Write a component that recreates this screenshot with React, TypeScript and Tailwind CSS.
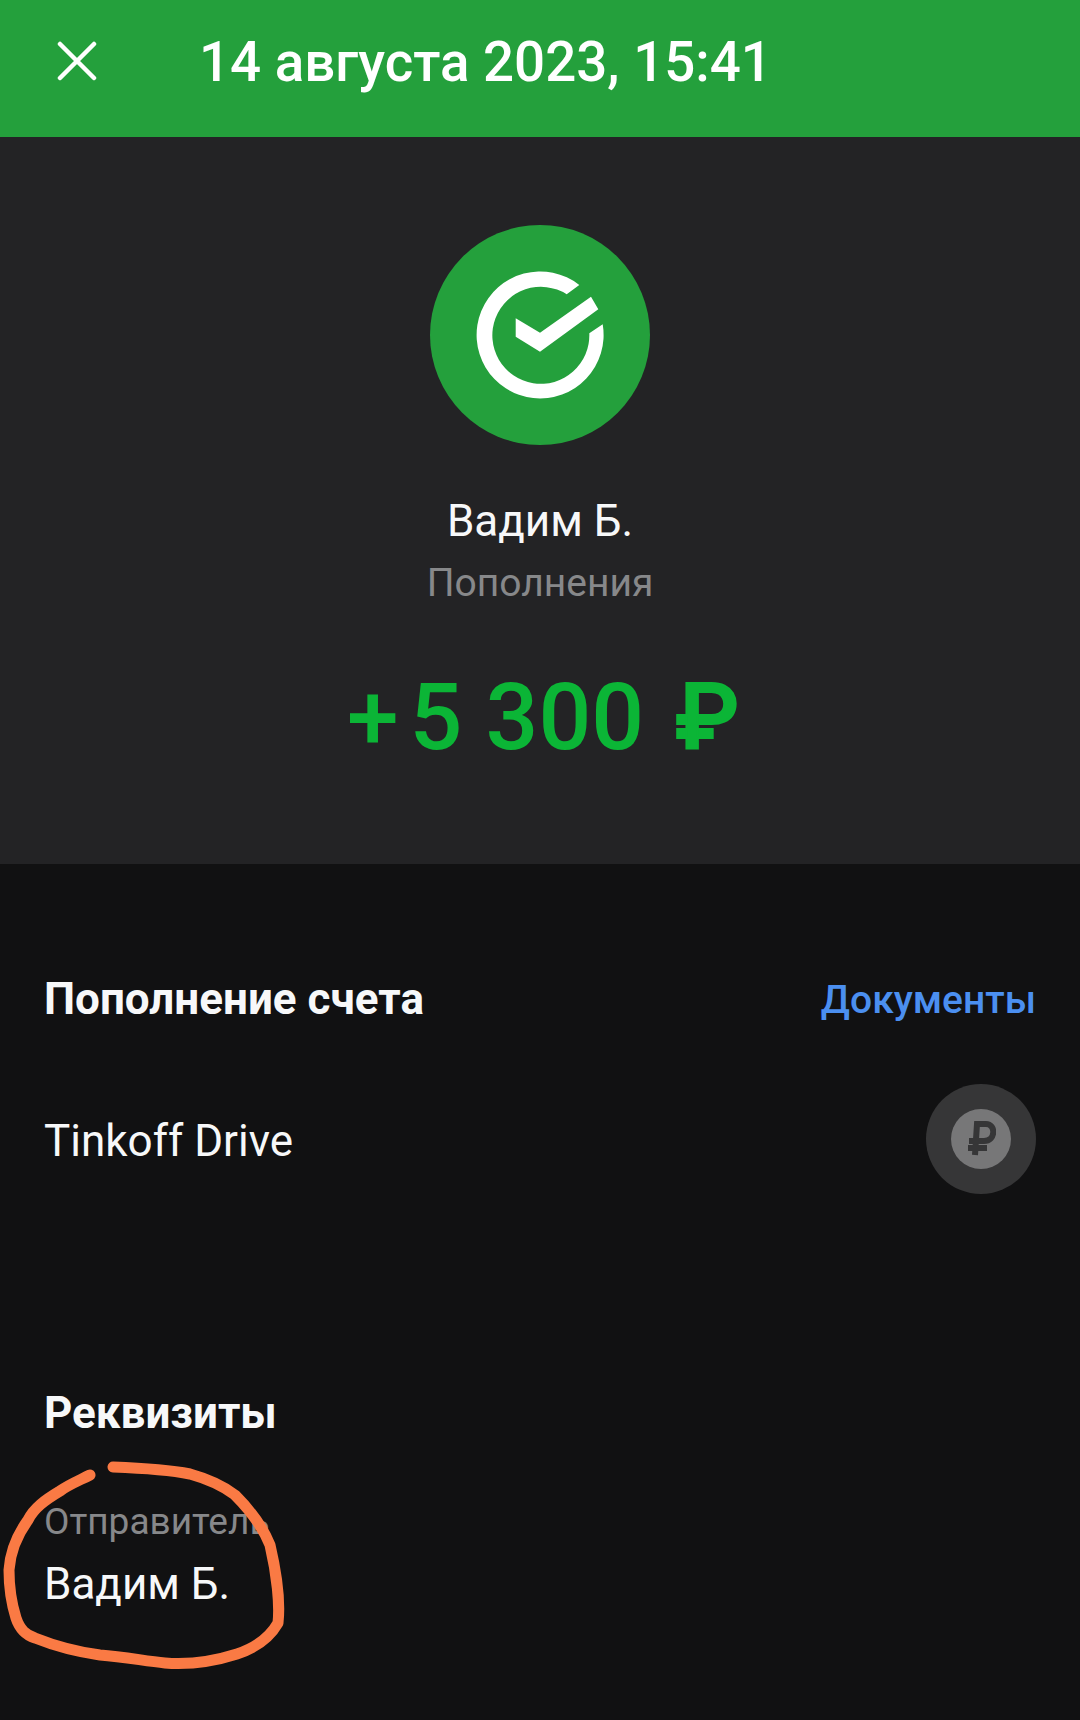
import React from "react";

const F = "font-['Roboto',sans-serif]";

export default function App() {
  return (
    <div className={`${F} relative w-[1080px] h-[1720px] overflow-hidden bg-[#111112] text-[#f7f8f9]`}>
      <header className="h-[137px] bg-[#24a03c] flex items-center pl-[57px] pb-[12px]">
        <svg width="40" height="40" viewBox="0 0 40 40" className="shrink-0 relative top-[-2px]">
          <path d="M3 3 L37 37 M37 3 L3 37" stroke="#fff" strokeWidth="4.5" strokeLinecap="round" fill="none" />
        </svg>
        <h1 className="ml-[102px] text-[54.7px] leading-none font-medium text-white whitespace-nowrap">14 августа 2023, 15:41</h1>
      </header>

      <section className="h-[727px] bg-[#232325] flex flex-col items-center pt-[88px]">
        <div className="w-[220px] h-[220px] rounded-full bg-[#24a03c] flex items-center justify-center">
          <svg width="130" height="130" viewBox="-65 -65 130 130">
            <path d="M39.3 -50 A63.5 63.5 0 1 0 62.7 -10.7 L49.3 -1.7 A48.5 48.5 0 1 1 26.7 -40.7 Z" fill="#fff" />
            <path d="M-24.3 -16.7 L-24.3 1.7 L0 16.7 L58.3 -25.7 L51 -38.3 L0 -2.3 Z" fill="#fff" />
          </svg>
        </div>
        <div className="mt-[50px] text-[44px] leading-[52px]">Вадим Б.</div>
        <div className="mt-[13px] text-[39px] leading-[46px] text-[#87888a]">Пополнения</div>
        <div className="mt-[57px] pl-[6px] text-[93px] leading-[110px] font-medium text-[#0bb536] whitespace-nowrap flex items-center">
          <span>+</span>
          <span className="ml-[11px]">5 300</span>
          <span className="ml-[31px] [-webkit-text-stroke:2px_#0bb536]">₽</span>
        </div>
      </section>

      <section className="px-[44px]">
        <div className="flex items-center justify-between mt-[110px]">
          <h2 className="text-[44px] leading-[50px] font-bold">Пополнение счета</h2>
          <span className="text-[39px] leading-[50px] font-medium text-[#4b8ff0] relative top-[1px]">Документы</span>
        </div>
        <div className="flex items-center justify-between mt-[60px]">
          <span className="text-[44px] leading-[50px] relative top-[2px]">Tinkoff Drive</span>
          <div className="w-[110px] h-[110px] rounded-full bg-[#363637] flex items-center justify-center">
            <div className="w-[60px] h-[60px] rounded-full bg-[#777778] flex items-center justify-center">
              <svg width="30" height="36" viewBox="0 0 30 36">
                <path d="M9 34 L11 3 L20 3 C30 3 30 20 18 20 L3 20 M2 27 L21 27" stroke="#363637" strokeWidth="6" fill="none" />
              </svg>
            </div>
          </div>
        </div>
        <h2 className="mt-[194px] text-[44px] leading-[50px] font-bold">Реквизиты</h2>
        <div className="mt-[62px] text-[37px] leading-[44px] text-[#87888a]">Отправитель</div>
        <div className="mt-[15px] text-[44px] leading-[50px]">Вадим Б.</div>
      </section>

      <svg className="absolute left-0 top-[1380px]" width="320" height="300" viewBox="0 0 320 300" fill="none">
        <path
          d="M90 95 C78 101 68 105 60 111 C45 120 34 128 28 140 C15 158 10 175 9 190 C9 205 11 222 16 238 C20 250 26 255 35 258 C55 266 78 272 100 275 C125 277 145 281 165 283 C190 285 215 281 237 274 C255 268 270 257 278 243 C280 225 277 195 270 165 C262 145 250 130 235 115 C222 105 208 99 190 94 C165 89 140 88 113 87"
          stroke="#fa7a44"
          strokeWidth="11"
          strokeLinecap="round"
          strokeLinejoin="round"
        />
      </svg>
    </div>
  );
}
